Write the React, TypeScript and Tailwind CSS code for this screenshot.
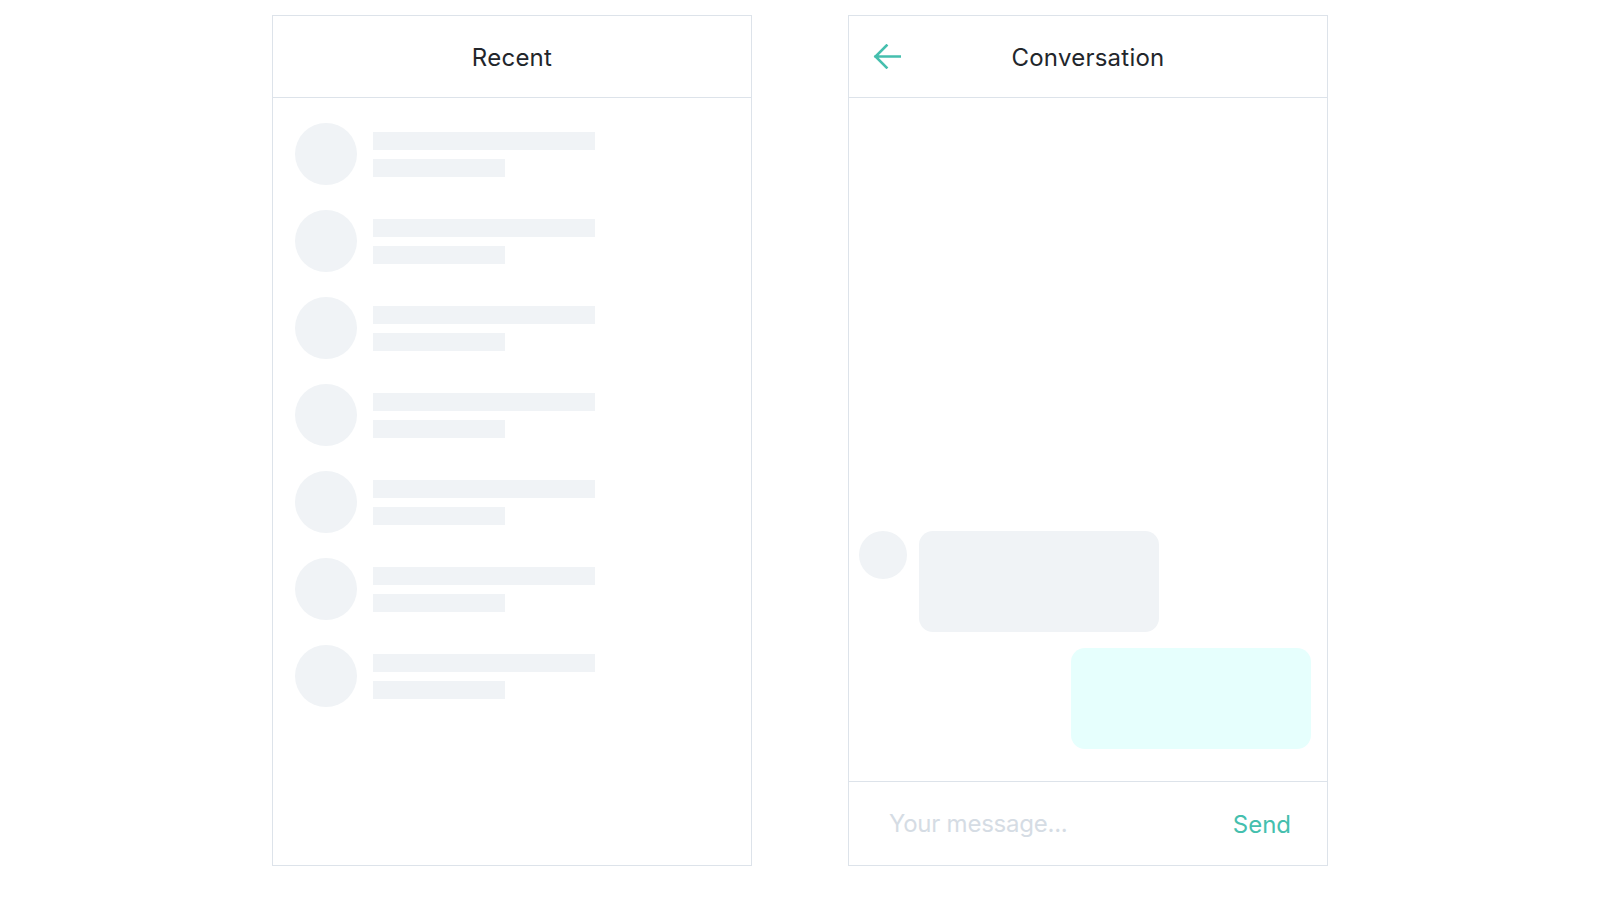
const rows = [1, 2, 3, 4, 5, 6, 7];

function RecentPanel() {
  return (
    <div className="w-[480px] h-[851px] border border-[#dde3ea] flex flex-col bg-white">
      <div className="h-[82px] border-b border-[#dde3ea] flex items-center justify-center pt-[2px]">
        <h2 className="text-[24px] tracking-[0.01em] text-[#22262b]">Recent</h2>
      </div>
      <div className="flex flex-col gap-[25px] pt-[25px] pl-[22px]">
        {rows.map((r) => (
          <div key={r} className="flex items-center gap-[16px]">
            <div className="w-[62px] h-[62px] rounded-full bg-[#f0f3f6]" />
            <div className="flex flex-col gap-[9px]">
              <div className="w-[222px] h-[18px] bg-[#f0f3f6]" />
              <div className="w-[132px] h-[18px] bg-[#f0f3f6]" />
            </div>
          </div>
        ))}
      </div>
    </div>
  );
}

function ConversationPanel() {
  return (
    <div className="w-[480px] h-[851px] border border-[#dde3ea] flex flex-col bg-white">
      <div className="relative h-[82px] border-b border-[#dde3ea] flex items-center justify-center pt-[2px]">
        <button className="absolute left-[24px] top-[28px] text-[#45bfae]">
          <svg width="28" height="25" viewBox="0 0 28 25" fill="none">
            <path
              d="M27 12.5H2.5M13.5 1.5L2.5 12.5L13.5 23.5"
              stroke="currentColor"
              strokeWidth="2.6"
              strokeLinecap="square"
            />
          </svg>
        </button>
        <h2 className="text-[24px] tracking-[0.01em] text-[#22262b]">Conversation</h2>
      </div>
      <div className="flex-1 flex flex-col justify-end gap-4 pl-[10px] pr-4 pb-8">
        <div className="flex items-start gap-3">
          <div className="w-12 h-12 rounded-full bg-[#f0f3f6]" />
          <div className="w-[240px] h-[101px] rounded-[14px] bg-[#f0f3f6]" />
        </div>
        <div className="flex justify-end">
          <div className="w-[240px] h-[101px] rounded-[14px] bg-[#e6fffd]" />
        </div>
      </div>
      <div className="h-[84px] border-t border-[#dde3ea] flex items-center pl-10 pr-9">
        <input
          placeholder="Your message..."
          className="flex-1 min-w-0 text-[24px] tracking-[-0.01em] outline-none placeholder:text-[#d5dce4] text-[#22262b] bg-transparent"
        />
        <button className="text-[24px] text-[#45bfae] pt-[2px]">Send</button>
      </div>
    </div>
  );
}

export default function App() {
  return (
    <div
      className="min-h-screen bg-white flex justify-center gap-24 pt-[15px]"
      style={{ fontFamily: "Inter, 'Noto Sans', sans-serif" }}
    >
      <RecentPanel />
      <ConversationPanel />
    </div>
  );
}
